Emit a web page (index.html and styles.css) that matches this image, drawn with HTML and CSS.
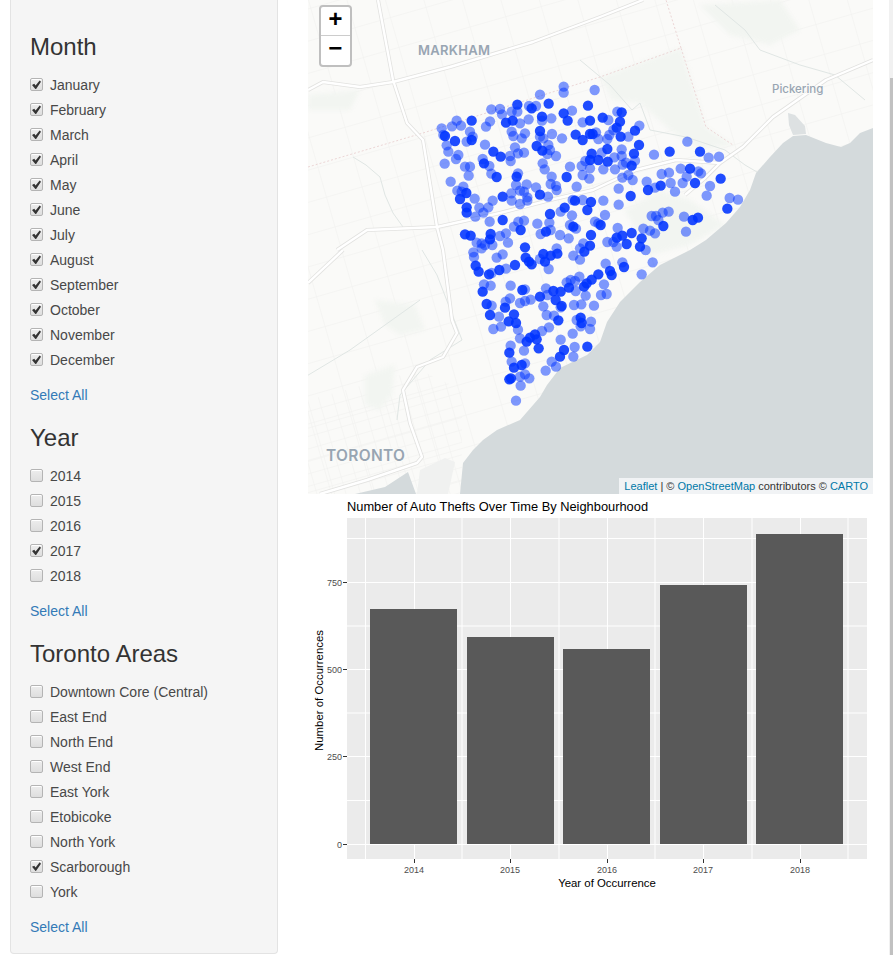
FILE: index.html
```html
<!DOCTYPE html>
<html lang="en">
<head>
<meta charset="utf-8">
<title>Auto Thefts in Toronto</title>
<link rel="stylesheet" href="styles.css">
</head>
<body>
<div class="page">
  <aside class="well">
    <section class="group">
      <h3>Month</h3>
      <div class="list">
        <label class="row"><input type="checkbox" checked><span>January</span></label>
        <label class="row"><input type="checkbox" checked><span>February</span></label>
        <label class="row"><input type="checkbox" checked><span>March</span></label>
        <label class="row"><input type="checkbox" checked><span>April</span></label>
        <label class="row"><input type="checkbox" checked><span>May</span></label>
        <label class="row"><input type="checkbox" checked><span>June</span></label>
        <label class="row"><input type="checkbox" checked><span>July</span></label>
        <label class="row"><input type="checkbox" checked><span>August</span></label>
        <label class="row"><input type="checkbox" checked><span>September</span></label>
        <label class="row"><input type="checkbox" checked><span>October</span></label>
        <label class="row"><input type="checkbox" checked><span>November</span></label>
        <label class="row"><input type="checkbox" checked><span>December</span></label>
      </div>
      <a class="all" href="#">Select All</a>
    </section>
    <section class="group">
      <h3>Year</h3>
      <div class="list">
        <label class="row"><input type="checkbox"><span>2014</span></label>
        <label class="row"><input type="checkbox"><span>2015</span></label>
        <label class="row"><input type="checkbox"><span>2016</span></label>
        <label class="row"><input type="checkbox" checked><span>2017</span></label>
        <label class="row"><input type="checkbox"><span>2018</span></label>
      </div>
      <a class="all" href="#">Select All</a>
    </section>
    <section class="group">
      <h3>Toronto Areas</h3>
      <div class="list">
        <label class="row"><input type="checkbox"><span>Downtown Core (Central)</span></label>
        <label class="row"><input type="checkbox"><span>East End</span></label>
        <label class="row"><input type="checkbox"><span>North End</span></label>
        <label class="row"><input type="checkbox"><span>West End</span></label>
        <label class="row"><input type="checkbox"><span>East York</span></label>
        <label class="row"><input type="checkbox"><span>Etobicoke</span></label>
        <label class="row"><input type="checkbox"><span>North York</span></label>
        <label class="row"><input type="checkbox" checked><span>Scarborough</span></label>
        <label class="row"><input type="checkbox"><span>York</span></label>
      </div>
      <a class="all" href="#">Select All</a>
    </section>
  </aside>

  <main class="main">
    <div class="map">
      <svg class="map-svg" viewBox="308 0 565 494" width="565" height="494" aria-label="Map of auto thefts">
        <defs>
          <pattern id="grid" width="37" height="31" patternUnits="userSpaceOnUse" patternTransform="rotate(-16)">
            <path class="gridline" d="M0 0H37M0 0V31"/>
          </pattern>
          <pattern id="fine" width="14" height="12" patternUnits="userSpaceOnUse" patternTransform="rotate(-16)">
            <path class="gridline" d="M0 0H14M0 0V12"/>
          </pattern>
        </defs>
        <rect class="land" x="308" y="0" width="565" height="494"/>
        <rect class="grid" x="308" y="0" width="565" height="494"/>
        <path class="fine" d="M308 400L420 370L462 390L462 494L308 494Z"/>
        <path class="park" d="M600 77L681 48L706 127L733 145L700 150L670 130L640 103L612 100Z"/>
        <path class="park" d="M700 5L780 0L800 30L770 45L730 35Z"/>
        <path class="park" d="M625 210L660 190L690 200L725 225L690 245L650 255Z"/>
        <path class="park" d="M375 300L415 305L425 330L400 335L385 325Z"/>
        <path class="park" d="M365 375L395 365L392 395L380 410L365 405Z"/>
        <path class="park" d="M308 95L360 90L350 110L308 110Z"/>
        <path class="river" d="M353 157L366 165L380 177L385 195L393 213L403 227"/>
        <path class="river" d="M640 103L650 130L686 137L725 150L745 165L757 172"/>
        <path class="river" d="M580 60L610 85L632 110L640 103"/>
        <path class="river" d="M422 250L437 275L462 340L430 360L400 395L397 420"/>
        <path class="river" d="M715 5L745 30L760 50L800 65L835 75L865 100"/>
        <path class="river" d="M300 380L350 350L420 300"/>
        <path class="water" d="M873 128L860 133L850 143L841 147L826 143L806 135L793 136L783 143L770 157L756 173L750 190L740 207L726 223L706 240L690 250L660 265L640 282L620 302L607 322L600 342L587 355L560 368L547 385L540 397L520 420L497 430L483 440L473 450L463 463L460 494L873 494Z"/>
        <path class="bay" d="M788 113L795 115L805 126L806 134L793 135L789 125Z"/>
        <path class="water" d="M355 494L385 487L408 472L416 494Z"/>
        <path class="dock" d="M417 494L420 470L445 458L455 462L448 494Z"/>
        <path class="boundary" d="M308 167L423 133L600 77L681 48L706 127L733 145"/>
        <path class="boundary" d="M681 48L666 0"/>
        <g class="road">
          <path class="casing" d="M378 0L393 80L407 123L423 140L437 227L443 250L452 320L457 333L443 357L417 367L403 390L410 423L422 457L417 463L367 480L320 494"/>
          <path class="casing" d="M308 90L323 82L360 87L393 82L450 67L533 42L600 17L643 0"/>
          <path class="casing" d="M337 250L367 230L437 227L500 213L550 200L593 190L636 170L676 160L720 163L743 147L773 117L826 80L873 60"/>
          <path class="casing" d="M308 283L343 250"/>
          <path class="casing" d="M685 195L705 178L720 163"/>
          <path class="inner" d="M378 0L393 80L407 123L423 140L437 227L443 250L452 320L457 333L443 357L417 367L403 390L410 423L422 457L417 463L367 480L320 494"/>
          <path class="inner" d="M308 90L323 82L360 87L393 82L450 67L533 42L600 17L643 0"/>
          <path class="inner" d="M337 250L367 230L437 227L500 213L550 200L593 190L636 170L676 160L720 163L743 147L773 117L826 80L873 60"/>
          <path class="inner" d="M308 283L343 250"/>
          <path class="inner" d="M685 195L705 178L720 163"/>
        </g>
        <text class="place big" x="418" y="55">MARKHAM</text>
        <text class="place small" x="772" y="93">Pickering</text>
        <text class="place huge" x="326" y="461">TORONTO</text>

        <g class="dots" transform="translate(430 80) scale(.33333)">
          <circle cx="401" cy="20"/><circle cx="401" cy="38"/><circle cx="330" cy="44"/><circle class="d" cx="356" cy="71"/><circle class="d" cx="262" cy="74"/><circle class="d" cx="305" cy="85"/><circle cx="184" cy="88"/><circle cx="210" cy="87"/><circle cx="297" cy="78"/><circle cx="318" cy="78"/><circle cx="426" cy="92"/><circle class="d" cx="401" cy="100"/><circle class="d" cx="336" cy="110"/><circle cx="245" cy="95"/><circle cx="262" cy="95"/><circle cx="216" cy="103"/><circle class="d" cx="125" cy="122"/><circle cx="180" cy="124"/><circle cx="168" cy="140"/><circle cx="80" cy="122"/><circle cx="66" cy="139"/><circle cx="35" cy="145"/><circle cx="93" cy="137"/><circle cx="364" cy="115"/><circle class="d" cx="413" cy="122"/><circle class="d" cx="228" cy="128"/><circle class="d" cx="248" cy="122"/><circle cx="270" cy="130"/><circle cx="296" cy="118"/><circle cx="336" cy="122"/><circle cx="120" cy="155"/><circle class="d" cx="45" cy="168"/><circle cx="40" cy="165"/><circle class="d" cx="75" cy="183"/><circle cx="110" cy="185"/><circle class="d" cx="125" cy="180"/><circle cx="128" cy="170"/><circle class="d" cx="330" cy="153"/><circle cx="366" cy="162"/><circle cx="245" cy="155"/><circle cx="285" cy="160"/><circle cx="250" cy="168"/><circle cx="275" cy="175"/><circle class="d" cx="437" cy="164"/><circle cx="396" cy="175"/><circle cx="330" cy="170"/><circle class="d" cx="320" cy="198"/><circle cx="340" cy="175"/><circle cx="355" cy="195"/><circle class="d" cx="337" cy="212"/><circle cx="165" cy="194"/><circle cx="255" cy="202"/><circle cx="50" cy="196"/><circle cx="55" cy="215"/><circle class="d" cx="190" cy="215"/><circle class="d" cx="212" cy="230"/><circle cx="240" cy="228"/><circle cx="242" cy="243"/><circle cx="264" cy="220"/><circle cx="282" cy="218"/><circle cx="360" cy="210"/><circle cx="378" cy="228"/><circle cx="352" cy="222"/><circle cx="85" cy="225"/><circle cx="78" cy="237"/><circle cx="44" cy="251"/><circle cx="158" cy="237"/><circle class="d" cx="162" cy="250"/><circle cx="178" cy="258"/><circle cx="105" cy="260"/><circle cx="120" cy="260"/><circle cx="116" cy="287"/><circle cx="338" cy="250"/><circle cx="344" cy="268"/><circle cx="420" cy="260"/><circle cx="264" cy="280"/><circle class="d" cx="260" cy="290"/><circle cx="184" cy="281"/><circle class="d" cx="200" cy="291"/><circle cx="365" cy="290"/><circle class="d" cx="410" cy="291"/><circle cx="62" cy="305"/><circle cx="258" cy="315"/><circle cx="290" cy="313"/><circle cx="318" cy="322"/><circle cx="362" cy="312"/><circle cx="378" cy="318"/><circle cx="380" cy="330"/><circle cx="440" cy="320"/><circle cx="100" cy="320"/><circle cx="82" cy="332"/><circle cx="95" cy="335"/><circle class="d" cx="109" cy="339"/><circle class="d" cx="90" cy="357"/><circle cx="134" cy="356"/><circle cx="244" cy="340"/><circle cx="270" cy="332"/><circle cx="282" cy="335"/><circle class="d" cx="330" cy="344"/><circle cx="354" cy="350"/><circle class="d" cx="218" cy="350"/><circle cx="245" cy="362"/><circle cx="270" cy="372"/><circle cx="292" cy="352"/><circle cx="292" cy="362"/><circle cx="188" cy="362"/><circle cx="175" cy="382"/><circle cx="148" cy="383"/><circle class="d" cx="110" cy="382"/><circle class="d" cx="110" cy="398"/><circle cx="160" cy="398"/><circle cx="136" cy="410"/><circle cx="428" cy="360"/><circle class="d" cx="435" cy="362"/><circle class="d" cx="404" cy="383"/><circle cx="392" cy="395"/><circle class="d" cx="360" cy="402"/><circle cx="426" cy="406"/><circle class="d" cx="218" cy="420"/><circle cx="179" cy="425"/><circle cx="282" cy="422"/><circle cx="265" cy="425"/><circle cx="252" cy="440"/><circle class="d" cx="272" cy="450"/><circle cx="322" cy="431"/><circle cx="358" cy="428"/><circle class="d" cx="348" cy="455"/><circle cx="332" cy="462"/><circle cx="362" cy="450"/><circle cx="420" cy="435"/><circle cx="438" cy="446"/><circle class="d" cx="430" cy="440"/><circle cx="390" cy="465"/><circle cx="416" cy="475"/><circle class="d" cx="105" cy="463"/><circle class="d" cx="122" cy="467"/><circle class="d" cx="182" cy="462"/><circle cx="228" cy="460"/><circle cx="210" cy="468"/><circle class="d" cx="180" cy="478"/><circle cx="140" cy="488"/><circle cx="155" cy="490"/><circle cx="165" cy="495"/><circle cx="234" cy="488"/>
        </g>
        <g class="dots" transform="translate(580 80) scale(.33333)">
          <circle cx="44" cy="30"/><circle class="d" cx="24" cy="77"/><circle cx="112" cy="95"/><circle class="d" cx="125" cy="97"/><circle class="d" cx="68" cy="113"/><circle cx="85" cy="120"/><circle class="d" cx="120" cy="125"/><circle class="d" cx="30" cy="122"/><circle cx="8" cy="127"/><circle cx="178" cy="137"/><circle class="d" cx="165" cy="152"/><circle class="d" cx="110" cy="143"/><circle cx="100" cy="150"/><circle cx="48" cy="157"/><circle class="d" cx="30" cy="162"/><circle class="d" cx="38" cy="162"/><circle cx="88" cy="165"/><circle class="d" cx="122" cy="170"/><circle cx="145" cy="170"/><circle class="d" cx="8" cy="180"/><circle cx="55" cy="177"/><circle cx="82" cy="177"/><circle class="d" cx="177" cy="195"/><circle cx="322" cy="185"/><circle class="d" cx="269" cy="215"/><circle cx="222" cy="224"/><circle class="d" cx="360" cy="215"/><circle class="d" cx="35" cy="221"/><circle class="d" cx="82" cy="207"/><circle cx="125" cy="208"/><circle cx="65" cy="218"/><circle class="d" cx="162" cy="221"/><circle cx="103" cy="232"/><circle cx="125" cy="228"/><circle class="d" cx="30" cy="240"/><circle class="d" cx="55" cy="240"/><circle class="d" cx="83" cy="245"/><circle cx="16" cy="243"/><circle cx="138" cy="248"/><circle cx="165" cy="242"/><circle class="d" cx="155" cy="257"/><circle cx="5" cy="258"/><circle cx="30" cy="265"/><circle cx="70" cy="268"/><circle cx="105" cy="268"/><circle cx="128" cy="254"/><circle cx="386" cy="233"/><circle cx="417" cy="230"/><circle cx="302" cy="266"/><circle class="d" cx="330" cy="266"/><circle cx="355" cy="274"/><circle cx="363" cy="280"/><circle cx="245" cy="282"/><circle cx="267" cy="278"/><circle cx="8" cy="285"/><circle cx="28" cy="296"/><circle cx="127" cy="293"/><circle cx="145" cy="285"/><circle cx="158" cy="300"/><circle cx="320" cy="290"/><circle class="d" cx="422" cy="296"/><circle cx="200" cy="305"/><circle cx="272" cy="309"/><circle cx="308" cy="309"/><circle class="d" cx="345" cy="309"/><circle cx="116" cy="326"/><circle class="d" cx="242" cy="317"/><circle cx="225" cy="323"/><circle class="d" cx="204" cy="330"/><circle cx="285" cy="335"/><circle cx="390" cy="318"/><circle class="d" cx="152" cy="348"/><circle cx="380" cy="347"/><circle cx="449" cy="354"/><circle cx="474" cy="359"/><circle cx="8" cy="360"/><circle class="d" cx="33" cy="366"/><circle cx="70" cy="362"/><circle cx="116" cy="374"/><circle class="d" cx="22" cy="390"/><circle cx="75" cy="405"/><circle class="d" cx="442" cy="386"/><circle cx="215" cy="408"/><circle cx="228" cy="408"/><circle cx="248" cy="398"/><circle cx="266" cy="395"/><circle cx="312" cy="410"/><circle class="d" cx="354" cy="413"/><circle class="d" cx="338" cy="420"/><circle cx="45" cy="425"/><circle class="d" cx="62" cy="435"/><circle cx="55" cy="430"/><circle cx="235" cy="420"/><circle class="d" cx="250" cy="438"/><circle cx="113" cy="444"/><circle cx="190" cy="446"/><circle cx="210" cy="452"/><circle cx="225" cy="460"/><circle cx="318" cy="455"/><circle class="d" cx="155" cy="459"/><circle class="d" cx="127" cy="467"/><circle class="d" cx="33" cy="465"/><circle class="d" cx="110" cy="473"/><circle class="d" cx="185" cy="475"/><circle cx="82" cy="486"/><circle cx="100" cy="486"/><circle class="d" cx="140" cy="492"/><circle cx="10" cy="490"/>
        </g>
        <g class="dots" transform="translate(460 245) scale(.33333)">
          <circle cx="40" cy="22"/><circle cx="42" cy="36"/><circle cx="65" cy="10"/><circle cx="97" cy="0"/><circle cx="110" cy="38"/><circle cx="128" cy="28"/><circle class="d" cx="195" cy="7"/><circle class="d" cx="197" cy="38"/><circle class="d" cx="207" cy="50"/><circle class="d" cx="215" cy="58"/><circle cx="240" cy="42"/><circle class="d" cx="250" cy="27"/><circle class="d" cx="255" cy="50"/><circle class="d" cx="272" cy="32"/><circle class="d" cx="292" cy="26"/><circle cx="290" cy="10"/><circle cx="340" cy="32"/><circle cx="360" cy="44"/><circle class="d" cx="373" cy="20"/><circle cx="360" cy="10"/><circle class="d" cx="390" cy="2"/><circle cx="437" cy="56"/><circle cx="487" cy="52"/><circle class="d" cx="492" cy="66"/><circle class="d" cx="450" cy="78"/><circle class="d" cx="455" cy="90"/><circle cx="578" cy="52"/><circle cx="557" cy="15"/><circle class="d" cx="540" cy="5"/><circle cx="470" cy="5"/><circle class="d" cx="165" cy="60"/><circle class="d" cx="47" cy="62"/><circle class="d" cx="56" cy="80"/><circle class="d" cx="87" cy="88"/><circle cx="95" cy="84"/><circle class="d" cx="118" cy="75"/><circle cx="138" cy="71"/><circle cx="266" cy="72"/><circle cx="545" cy="88"/><circle class="d" cx="415" cy="88"/><circle class="d" cx="395" cy="104"/><circle class="d" cx="380" cy="115"/><circle class="d" cx="372" cy="125"/><circle cx="358" cy="95"/><circle cx="320" cy="112"/><circle cx="332" cy="105"/><circle cx="345" cy="108"/><circle class="d" cx="327" cy="128"/><circle cx="347" cy="138"/><circle cx="432" cy="118"/><circle cx="377" cy="152"/><circle cx="72" cy="118"/><circle cx="92" cy="122"/><circle cx="152" cy="122"/><circle class="d" cx="68" cy="140"/><circle class="d" cx="187" cy="135"/><circle cx="195" cy="133"/><circle cx="258" cy="130"/><circle class="d" cx="280" cy="138"/><circle class="d" cx="302" cy="140"/><circle class="d" cx="240" cy="155"/><circle cx="262" cy="150"/><circle class="d" cx="287" cy="165"/><circle cx="440" cy="147"/><circle cx="423" cy="150"/><circle cx="150" cy="160"/><circle cx="137" cy="170"/><circle cx="212" cy="164"/><circle cx="195" cy="168"/><circle cx="180" cy="174"/><circle cx="342" cy="180"/><circle cx="364" cy="178"/><circle cx="402" cy="182"/><circle class="d" cx="80" cy="177"/><circle cx="95" cy="182"/><circle class="d" cx="135" cy="188"/><circle cx="250" cy="184"/><circle cx="302" cy="187"/><circle class="d" cx="305" cy="183"/><circle class="d" cx="90" cy="210"/><circle cx="117" cy="215"/><circle class="d" cx="162" cy="208"/><circle cx="260" cy="210"/><circle cx="282" cy="212"/><circle class="d" cx="295" cy="226"/><circle class="d" cx="362" cy="218"/><circle cx="350" cy="225"/><circle class="d" cx="365" cy="234"/><circle cx="393" cy="230"/><circle class="d" cx="146" cy="229"/><circle class="d" cx="168" cy="234"/><circle cx="100" cy="252"/><circle cx="123" cy="245"/><circle cx="174" cy="254"/><circle cx="267" cy="247"/><circle cx="362" cy="244"/><circle cx="390" cy="252"/><circle cx="246" cy="258"/><circle cx="180" cy="280"/><circle class="d" cx="225" cy="268"/><circle class="d" cx="210" cy="278"/><circle class="d" cx="200" cy="290"/><circle class="d" cx="230" cy="283"/><circle cx="338" cy="266"/><circle cx="302" cy="284"/><circle class="d" cx="236" cy="310"/><circle cx="152" cy="302"/><circle cx="344" cy="306"/><circle class="d" cx="382" cy="305"/><circle class="d" cx="148" cy="323"/><circle cx="192" cy="317"/><circle class="d" cx="312" cy="315"/><circle class="d" cx="300" cy="335"/><circle cx="340" cy="335"/><circle cx="155" cy="350"/><circle cx="275" cy="350"/><circle class="d" cx="162" cy="368"/><circle class="d" cx="185" cy="360"/><circle cx="195" cy="355"/><circle cx="288" cy="365"/><circle cx="257" cy="377"/><circle cx="195" cy="388"/><circle cx="208" cy="400"/><circle cx="180" cy="395"/><circle class="d" cx="153" cy="400"/><circle class="d" cx="148" cy="403"/><circle cx="182" cy="422"/><circle cx="168" cy="467"/>
        </g>
      </svg>
      <div class="zoom">
        <a class="zoom-btn" href="#">+</a>
        <a class="zoom-btn" href="#">&#8722;</a>
      </div>
      <div class="attribution"><a href="#">Leaflet</a> | © <a href="#">OpenStreetMap</a> contributors © <a href="#">CARTO</a></div>
    </div>

    <svg class="chart" viewBox="308 494 565 400" width="565" height="400" aria-label="Bar chart of auto thefts by year">
      <text class="plot-title" x="347" y="511">Number of Auto Thefts Over Time By Neighbourhood</text>
      <rect class="panel" x="347" y="518" width="520" height="341"/>
      <path class="minor" d="M347 538.5H867M347 626H867M347 713H867M347 800.5H867M365.5 518V859M462 518V859M559 518V859M655 518V859M752 518V859M848 518V859"/>
      <path class="major" d="M347 582.5H867M347 669.5H867M347 756.5H867M347 844.5H867M414.500 518V859M510.500 518V859M607.500 518V859M703.500 518V859M800.500 518V859"/>
      <rect class="bar" x="370" y="609" width="87" height="235"/>
      <rect class="bar" x="467" y="637" width="87" height="207"/>
      <rect class="bar" x="563" y="649" width="87" height="195"/>
      <rect class="bar" x="660" y="585" width="87" height="259"/>
      <rect class="bar" x="756" y="534" width="87" height="310"/>
      <path class="tick" d="M343 582.500H347M343 669.500H347M343 756.500H347M343 844.500H347M414.500 859V863M510.500 859V863M607.500 859V863M703.500 859V863M800.500 859V863"/>
      <text class="ytick" x="342" y="586">750</text>
      <text class="ytick" x="342" y="673">500</text>
      <text class="ytick" x="342" y="760">250</text>
      <text class="ytick" x="342" y="848">0</text>
      <text class="xtick" x="414" y="873">2014</text>
      <text class="xtick" x="510" y="873">2015</text>
      <text class="xtick" x="607" y="873">2016</text>
      <text class="xtick" x="703" y="873">2017</text>
      <text class="xtick" x="800" y="873">2018</text>
      <text class="axis-title" x="607" y="887">Year of Occurrence</text>
      <text class="axis-title" transform="translate(322.500 690.500) rotate(-90)">Number of Occurrences</text>
    </svg>
  </main>

  <div class="scrollbar"><div class="thumb"></div></div>
</div>
</body>
</html>
```
FILE: styles.css
```css
* { box-sizing: border-box; }
html, body { margin: 0; height: 100%; overflow: hidden; background: #fff; }
body { font-family: "Liberation Sans", Arial, sans-serif; font-size: 14px; color: #333; }

.page { display: flex; height: 955px; padding-left: 10px; }

.well {
  width: 268px; height: 954px; flex: none;
  padding: 34px 19px 0;
  background: #f5f5f5;
  border: 1px solid #e3e3e3; border-top: 0;
  border-radius: 0 0 4px 4px;
}
.well .group { display: flex; flex-direction: column; align-items: flex-start; margin-bottom: 19.6px; }
.well h3 { margin: 0 0 12px; font-size: 24px; font-weight: 500; line-height: 1.1; color: #333; }
.list { display: flex; flex-direction: column; margin-bottom: 13px; }
.row { display: flex; align-items: center; height: 25px; gap: 7px; color: #484848; }
.row input {
  appearance: none; position: relative; margin: 0; flex: none;
  width: 13px; height: 13px;
  background: linear-gradient(#ededed, #dedede);
  border: 1px solid #b4b4b4; border-radius: 2px;
  box-shadow: 0 1px 0 #fff inset;
}
.row input:checked::after {
  content: ""; position: absolute; left: 1px; top: 1px; width: 9px; height: 9px;
  background: #333;
  clip-path: polygon(0 50%, 25% 38%, 40% 58%, 85% 0, 100% 15%, 42% 100%);
}
.all { display: block; height: 20px; line-height: 20px; color: #337ab7; text-decoration: none; }

.main { width: 565px; flex: none; margin-left: 30px; display: flex; flex-direction: column; }
.map { position: relative; width: 565px; height: 494px; overflow: hidden; }
.map-svg, .chart { display: block; }

.land { fill: #fafaf8; }
.grid { fill: url(#grid); }
.fine { fill: url(#fine); }
.gridline { fill: none; stroke: #f0f0ee; stroke-width: 1; }
.park { fill: #f2f5f1; filter: blur(2px); }
.river { fill: none; stroke: #e0e6e4; stroke-width: 1; }
.water { fill: #d4dadc; }
.bay { fill: #dde1e2; }
.dock { fill: #f0f1f0; }
.boundary { fill: none; stroke: #ecd6d6; stroke-width: 1; stroke-dasharray: 2 2; }
.road path { fill: none; stroke-linejoin: round; }
.casing { stroke: #e2e2e0; stroke-width: 4; }
.inner { stroke: #fff; stroke-width: 2.4; }
.place { font-family: Inter, "Liberation Sans", sans-serif; fill: #98a5b2; paint-order: stroke; stroke: #fafaf8; stroke-width: 2px; }
.big { font-size: 13px; font-weight: 600; letter-spacing: .3px; }
.small { font-size: 11.500px; font-weight: 500; }
.huge { font-size: 15.500px; font-weight: 600; letter-spacing: .3px; }
.dots circle { r: 15.500px; fill: #0033ff; fill-opacity: .5; }
.dots circle.d { fill-opacity: .88; }

.zoom {
  position: absolute; left: 11px; top: 5px; width: 33px;
  display: flex; flex-direction: column;
  background: #fff; border: 2px solid #bfbfbf; border-radius: 4px; overflow: hidden;
}
.zoom-btn {
  display: block; height: 28px; text-align: center;
  font: 700 24px/28px "Liberation Mono", monospace; color: #000; text-decoration: none;
}
.zoom-btn + .zoom-btn { border-top: 1px solid #ccc; height: 30px; }
.attribution {
  position: absolute; right: 0; bottom: 0; height: 16px; padding: 0 5px;
  font-size: 11px; line-height: 16px; color: #333; background: #f1f3f5; white-space: nowrap;
}
.attribution a { color: #0078a8; text-decoration: none; }

.chart text { font-family: "Liberation Sans", Arial, sans-serif; }
.plot-title { font-size: 12.850px; fill: #000; }
.panel { fill: #ebebeb; }
.major { fill: none; stroke: #fff; stroke-width: 1; }
.minor { fill: none; stroke: #fff; stroke-width: 1; }
.bar { fill: #595959; }
.tick { fill: none; stroke: #333; stroke-width: 1; }
.ytick { font-size: 9px; fill: #4d4d4d; text-anchor: end; }
.xtick { font-size: 9px; fill: #4d4d4d; text-anchor: middle; }
.axis-title { font-size: 11.400px; fill: #000; text-anchor: middle; }

.scrollbar { position: absolute; left: 889px; top: 0; width: 4px; height: 955px; background: #f1f1f1; }
.thumb { margin: 78px 0 0 1px; height: 877px; background: #c1c1c1; }
```
